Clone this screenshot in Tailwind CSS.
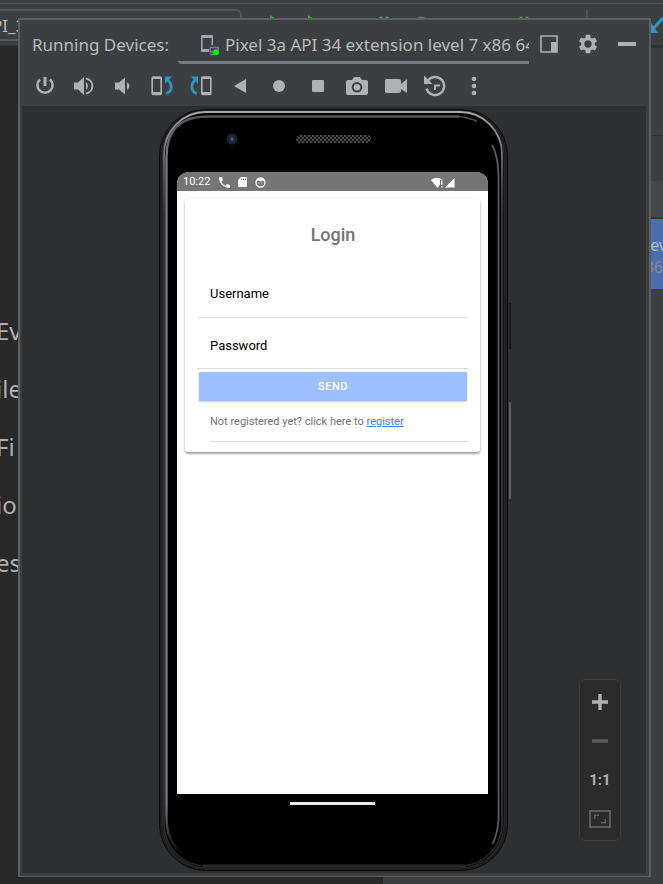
<!DOCTYPE html>
<html lang="en">
<head>
<meta charset="utf-8">
<meta name="viewport" content="width=device-width, initial-scale=1">
<title>Running Devices</title>
<script src="https://cdn.jsdelivr.net/npm/@tailwindcss/browser@4"></script>
</head>
<body class="bg-[#282828] font-['Noto_Sans',sans-serif]">
<div class="relative flex h-screen flex-col overflow-hidden">

  <!-- IDE behind the floating window -->
  <header class="flex h-[46px] shrink-0 flex-col border-b border-[#323232] bg-[#3c3f41]">
    <div class="h-1 shrink-0 border-b border-[#515456]"></div>
    <div class="flex items-start pt-[5px]">
      <div class="flex h-[32px] w-[242px] shrink-0 items-center rounded-r-md border-2 border-l-0 border-[#55585a] pt-[2px] text-[17px] leading-[24px] text-[#bbbbbb]"><span class="-ml-2">PI_3a</span></div>
      <svg class="h-[32px] w-[346px] shrink-0" viewBox="0 0 346 32" fill="none" aria-hidden="true">
        <path d="M28 6l6 4h-6zM66 6l6 4h-6zM137 9l2-2 2 2zM143 9l2-2 2 2zM277 9l2-2 2 2zM283 9l2-2 2 2z" fill="#499c54"/>
        <path d="M174 9q5-3 10 0z" fill="#6e6e6e"/>
        <path d="M345 1v22" stroke="#515456" stroke-width="2"/>
      </svg>
      <div class="flex flex-1 justify-end">
        <svg class="h-[32px] w-[14px]" viewBox="0 0 14 32" fill="none" aria-hidden="true"><path d="M14 9L4 20" stroke="#3592c4" stroke-width="3"/><path d="M1 12v12h8z" fill="#3592c4"/></svg>
      </div>
    </div>
  </header>
  <div class="flex min-h-0 flex-1">
    <ul class="flex min-w-0 flex-1 flex-col gap-[26px] overflow-hidden bg-[#282828] pt-[269px] text-[24px] leading-[32px] whitespace-nowrap text-[#b0b0b0]">
      <li class="-ml-1">Ev</li>
      <li class="-ml-1">ile</li>
      <li class="-ml-1">Fi</li>
      <li class="-ml-1">io</li>
      <li class="-ml-1">es</li>
    </ul>
    <aside class="flex w-[280px] shrink-0 flex-col items-stretch bg-[#3c3f41] text-right text-[16px] leading-[22px]">
      <div class="h-[90px] border-t-2 border-b border-[#323232]"></div>
      <div class="h-[45px]"></div>
      <div class="h-[38px] border-b-2 border-[#323232] bg-[#45484a]"></div>
      <div class="h-[70px] overflow-hidden bg-[#4b6eaf] pt-[15px]">
        <p class="-mr-1 text-[#bbbbbb]">ev</p>
        <p class="text-[#888888]">36</p>
      </div>
    </aside>
  </div>

  <!-- Floating tool window -->
  <section class="absolute top-[18px] right-[12px] bottom-[7px] left-[18px] flex flex-col border-2 border-b border-[#5e5e5e] bg-[#3c3f41]">
    <div class="flex h-[46px] shrink-0 items-stretch pr-[3px] text-[17px] text-[#bbbbbb]">
      <h1 class="w-[158px] shrink-0 pt-[13px] pl-3 leading-[24px] whitespace-nowrap">Running Devices:</h1>
      <div class="flex min-w-0 flex-1 flex-col">
        <button type="button" class="flex h-[44px] items-start overflow-hidden rounded-bl-sm border-b-[3px] border-[#747a86] pt-[13px] pl-[22px] text-left leading-[24px] whitespace-nowrap">
          <svg class="mr-[5px] h-[24px] w-[20px] shrink-0" viewBox="0 0 20 24" fill="none" aria-hidden="true">
            <path d="M2 2h10q1 0 1 1v9h-1.600V5H2.600v11H9v3H2q-1 0-1-1V3q0-1 1-1z" fill="#9aa7b0"/>
            <path d="M18.300 17v-2.500h-8v4.500h3M10 21.500h5" stroke="#8b6bb5" stroke-width="1.500"/>
            <circle cx="16" cy="19.300" r="3" fill="#00f500"/>
          </svg>
          <span>Pixel 3a API 34 extension level 7 x86 64</span>
        </button>
      </div>
      <div class="flex shrink-0 items-center pt-[2px]">
        <button type="button" aria-label="Dock" class="flex w-[39px] justify-center"><svg class="size-[20px]" viewBox="0 0 20 20"><path d="M2 2h16v16H2z" fill="none" stroke="#afb1b3" stroke-width="1.600"/><path d="M12 8h6v10h-6z" fill="#afb1b3"/></svg></button>
        <button type="button" aria-label="Settings" class="flex w-[39px] justify-center"><svg class="size-[22px]" viewBox="0 0 24 24" fill="#afb1b3"><path d="M19.430 12.980c.04-.32.070-.64.070-.98s-.03-.66-.07-.98l2.110-1.650c.19-.15.240-.42.120-.64l-2-3.460c-.12-.22-.39-.3-.61-.22l-2.490 1c-.52-.4-1.080-.73-1.690-.98l-.38-2.650C14.460 2.180 14.250 2 14 2h-4c-.25 0-.46.180-.49.420l-.38 2.650c-.61.250-1.170.590-1.690.980l-2.490-1c-.23-.09-.49 0-.61.220l-2 3.460c-.13.220-.07.490.120.640l2.110 1.650c-.04.320-.07.650-.07.980s.03.660.07.980l-2.110 1.650c-.19.150-.24.420-.12.640l2 3.460c.12.220.39.300.61.220l2.490-1c.52.400 1.080.730 1.690.980l.38 2.650c.03.240.24.420.49.420h4c.25 0 .46-.18.490-.42l.38-2.650c.61-.25 1.170-.59 1.690-.98l2.490 1c.23.090.49 0 .61-.22l2-3.460c.12-.22.070-.49-.12-.64zM12 16a4 4 0 110-8 4 4 0 010 8z"/></svg></button>
        <button type="button" aria-label="Hide" class="flex w-[39px] justify-center"><svg class="size-[20px]" viewBox="0 0 20 20"><path d="M1 8h18v4H1z" fill="#afb1b3"/></svg></button>
      </div>
    </div>

    <div role="toolbar" aria-label="Device controls" class="flex h-[40px] shrink-0 items-center pl-[5px]">
      <button type="button" aria-label="Power" class="flex w-[39px] justify-center"><svg class="size-[20px]" viewBox="0 0 20 20" fill="none" stroke="#afb1b3"><path d="M10 1v9" stroke-width="3"/><path d="M5 3.500a7.600 7.600 0 1010 0" stroke-width="2.600"/></svg></button>
      <button type="button" aria-label="Volume up" class="flex w-[39px] justify-center"><svg class="size-[22px]" viewBox="0 0 22 22"><path d="M1 7.500h4l6-5.500v18l-6-5.500H1zM13 7q4 4 0 8z" fill="#afb1b3"/><path d="M13 3.500a7.600 7.600 0 010 15" fill="none" stroke="#afb1b3" stroke-width="2"/></svg></button>
      <button type="button" aria-label="Volume down" class="flex w-[39px] justify-center"><svg class="size-[20px]" viewBox="0 0 20 20" fill="#afb1b3"><path d="M2 6.500h4l6-5v17l-6-5H2zM14 6q5 4 0 8z"/></svg></button>
      <button type="button" aria-label="Rotate left" class="flex w-[39px] justify-center"><svg class="size-[22px]" viewBox="0 0 22 22" fill="none"><rect x="1.200" y="2" width="9" height="17.500" rx="1" stroke="#afb1b3" stroke-width="1.600"/><path d="M1 3h9.500M1 18h9.500" stroke="#afb1b3" stroke-width="2"/><path d="M15 18.500q6-1.500 5-8-.4-3-3-5.500" stroke="#3592c4" stroke-width="2.800"/><path d="M14 1.500h7L14 9z" fill="#3592c4"/></svg></button>
      <button type="button" aria-label="Rotate right" class="flex w-[39px] justify-center"><svg class="size-[22px]" viewBox="0 0 22 22" fill="none"><rect x="11.800" y="2" width="9" height="17.500" rx="1" stroke="#afb1b3" stroke-width="1.600"/><path d="M11.500 3H21M11.500 18H21" stroke="#afb1b3" stroke-width="2"/><path d="M7 18.500q-6-1.500-5-8 .4-3 3-5.500" stroke="#3592c4" stroke-width="2.800"/><path d="M1 1.500h7V9z" fill="#3592c4"/></svg></button>
      <button type="button" aria-label="Back" class="flex w-[39px] justify-center"><svg class="size-[20px]" viewBox="0 0 20 20" fill="#afb1b3"><path d="M16 3v14L4 10z"/></svg></button>
      <button type="button" aria-label="Home" class="flex w-[39px] justify-center"><svg class="size-[20px]" viewBox="0 0 20 20" fill="#afb1b3"><circle cx="10" cy="10" r="6"/></svg></button>
      <button type="button" aria-label="Overview" class="flex w-[39px] justify-center"><svg class="size-[20px]" viewBox="0 0 20 20" fill="#afb1b3"><rect x="4" y="4" width="12" height="12" rx="1"/></svg></button>
      <button type="button" aria-label="Screenshot" class="flex w-[39px] justify-center"><svg class="size-[22px]" viewBox="0 0 22 22" fill="#afb1b3"><path fill-rule="evenodd" d="M2 5h4l2-3h6l2 3h4q2 0 2 2v11q0 2-2 2H2q-2 0-2-2V7q0-2 2-2zM11 7a5.300 5.300 0 100 10.600A5.300 5.300 0 0011 7z"/><circle cx="11" cy="12.300" r="3.300"/></svg></button>
      <button type="button" aria-label="Record" class="flex w-[39px] justify-center"><svg class="size-[22px]" viewBox="0 0 22 22" fill="#afb1b3"><path d="M1.500 4H14q2 0 2 2v3l6-5v14l-6-4v2q0 2-2 2H1.500Q0 18 0 16.500v-11Q0 4 1.500 4z"/></svg></button>
      <button type="button" aria-label="Snapshots" class="flex w-[39px] justify-center"><svg class="size-[22px]" viewBox="0 0 22 22" fill="none" stroke="#afb1b3"><path d="M4 5.500a9 9 0 11-1.500 8" stroke-width="2.500"/><path d="M0 .5V9h8.500z" fill="#afb1b3" stroke="none"/><path d="M16 10.500h-5V15" stroke-width="2"/></svg></button>
      <button type="button" aria-label="More" class="flex w-[39px] justify-center"><svg class="size-[20px]" viewBox="0 0 20 20" fill="#afb1b3"><circle cx="10" cy="3" r="2.300"/><circle cx="10" cy="10" r="2.300"/><circle cx="10" cy="17" r="2.300"/></svg></button>
    </div>

    <div class="relative mr-[3px] mb-[3px] ml-[2px] flex min-h-0 flex-1 justify-center bg-[#2e2f30] pt-[2px]">
      <!-- Phone -->
      <div class="relative flex h-[764px] w-[354px] shrink-0 flex-col pt-[64px] pr-[23px] pl-[20px]">
        <svg class="absolute inset-0 size-full" viewBox="0 0 354 764" fill="none" aria-hidden="true">
          <defs>
            <linearGradient id="rim" x1="0" y1="0" x2="0" y2="1"><stop offset="0" stop-color="#a8a8ac"/><stop offset=".08" stop-color="#5a5a60"/><stop offset=".14" stop-color="#333336"/><stop offset=".9" stop-color="#333336"/><stop offset=".99" stop-color="#222222"/></linearGradient>
            <linearGradient id="edge" x1="0" y1="0" x2="0" y2="1"><stop offset="0" stop-color="#55555b"/><stop offset=".06" stop-color="#75757d"/><stop offset=".93" stop-color="#75757d"/><stop offset="1" stop-color="#75757d" stop-opacity="0"/></linearGradient>
            <pattern id="mesh" width="4" height="4" patternUnits="userSpaceOnUse"><rect width="4" height="4" fill="#151515"/><path d="M0 0l4 4M4 0L0 4" stroke="#4c4c4c"/></pattern>
          </defs>
          <path d="M353 195v46" stroke="#1a1a1a" stroke-width="2"/>
          <path d="M353 294v97" stroke="#707070" stroke-width="1.500"/>
          <rect x="2.500" y="1.500" width="348" height="761" rx="46" fill="#1f1f1f" stroke="#0a0a0a"/>
          <rect x="5.500" y="3" width="341.500" height="757" rx="44" fill="#000" stroke="#2c2c2c"/>
          <rect x="7" y="4" width="338" height="754" rx="42" stroke="url(#rim)" stroke-width="1.800"/>
          <rect x="10" y="8" width="332" height="749" rx="38" fill="#000"/>
          <path d="M302 8.500H50Q9.500 8.500 9.500 49V710q0 24 18 38" stroke="url(#edge)" stroke-width="2.400"/>
          <path d="M302 8.500q13 2 18 5" stroke="#4c4c52" stroke-width="1.500"/>
          <path d="M335 37q6 10 6.500 30v645q-1 14-6 24" stroke="#5a5a60" stroke-width="1.800"/>
          <path d="M46 758H308" stroke="#2a2a2a" stroke-width="3"/>
          <circle cx="75" cy="31" r="5.500" fill="#222"/><circle cx="75" cy="31" r="3.200" fill="#202c52"/><circle cx="75" cy="31" r="1.200" fill="#4f68b0"/>
          <rect x="139" y="27" width="75" height="8" rx="4" fill="url(#mesh)"/>
        </svg>

        <div class="relative flex h-[622px] flex-col overflow-hidden rounded-t-xl bg-white font-[Roboto,sans-serif]">
          <div class="flex h-[19px] shrink-0 items-center bg-[#757575] pt-px pl-[6px] pr-[33px] text-[11px] leading-[16px] text-white">
            <span>10:22</span>
            <svg class="ml-[9px] size-[11px]" viewBox="3 3 18 18" fill="currentColor" aria-hidden="true"><path d="M6.620 10.790c1.440 2.830 3.760 5.140 6.590 6.590l2.200-2.200c.27-.27.670-.36 1.020-.24 1.120.37 2.330.570 3.570.570.550 0 1 .45 1 1V20c0 .55-.45 1-1 1-9.390 0-17-7.610-17-17 0-.55.450-1 1-1h3.500c.55 0 1 .45 1 1 0 1.250.2 2.450.570 3.570.11.350.03.740-.25 1.020z"/></svg>
            <svg class="ml-[8px] h-[10px] w-[9px]" viewBox="0 0 9 10" fill="currentColor" aria-hidden="true"><path fill-rule="evenodd" d="M3 0h5q1 0 1 1v8q0 1-1 1H1Q0 10 0 9V3zM3 1.500V3h1V1.500zM5 1.500V3h1V1.500zM7 1.500V3h1V1.500z"/></svg>
            <svg class="ml-[8px] size-[11px]" viewBox="0 0 11 11" fill="none" stroke="currentColor" aria-hidden="true"><circle cx="5.500" cy="5.500" r="4.500" stroke-width="1.300"/><path d="M1 4.500L2.500 1.500h6L10 4.500 7.500 3.500 5.500 4.500 3.500 3.500z" fill="currentColor" stroke="none"/><path d="M3.500 6h1M6.500 6h1"/></svg>
            <svg class="ml-auto h-[11px] w-[24px]" viewBox="0 0 24 11" fill="currentColor" aria-hidden="true"><path d="M0 3Q6-1.500 12 3H9v4.500L6.500 11zM10 3.500h1.500V8H10zM10 9h1.500v1.500H10zM23.500 1v9.500H14z"/></svg>
          </div>

          <main class="mx-[8px] mt-[8px] rounded-[3px] bg-white pr-[12px] pl-[13px] pb-[10px] shadow-[0_2px_2px_rgba(0,0,0,0.25),0_1px_3px_rgba(0,0,0,0.22)]">
            <h2 class="pt-[24px] text-center text-[18px] leading-[24px] font-medium text-[#737373]">Login</h2>
            <form>
              <div class="mt-[20px] flex h-[51px] items-center border-b border-[#e4e4e4] pt-[4px] pl-[12px] text-[13px] leading-[16px] text-black">
                <label for="username">Username</label>
                <input id="username" type="text" class="ml-2 min-w-0 flex-1 bg-transparent outline-none">
              </div>
              <div class="flex h-[51px] items-center border-b border-[#d6d6d6] pt-[5px] pl-[12px] text-[13px] leading-[16px] text-black">
                <label for="password">Password</label>
                <input id="password" type="password" class="ml-2 min-w-0 flex-1 bg-transparent outline-none">
              </div>
              <div class="px-px pt-[3px]">
                <button type="submit" class="block h-[29px] w-full rounded-[1px] bg-[#9dbfff] text-[11px] leading-[14px] font-medium tracking-wider text-white shadow-[0_1px_2px_rgba(0,0,0,0.2)]">SEND</button>
              </div>
            </form>
            <p class="ml-[12px] h-[41px] border-b border-[#dedede] pt-[14px] text-[11px] leading-[14px] whitespace-nowrap text-[#737373]">Not registered yet? click here to <a href="#register" class="text-[#3880ff] underline">register</a></p>
          </main>
        </div>
        <div class="relative mx-auto mt-[8px] h-[3px] w-[85px] bg-[#ececec]"></div>
      </div>

      <!-- Zoom controls float over the device view -->
      <div class="absolute right-[25px] bottom-[32px] flex w-[42px] flex-col rounded-md border border-[#3c3e3f] bg-[#2b2b2b] py-[2px]">
        <button type="button" aria-label="Zoom in" class="flex h-[39px] items-center justify-center"><svg class="size-[16px]" viewBox="0 0 16 16"><path d="M8 0v16M0 8h16" stroke="#afb1b3" stroke-width="3.400"/></svg></button>
        <button type="button" aria-label="Zoom out" disabled class="flex h-[39px] items-center justify-center"><svg class="size-[16px]" viewBox="0 0 16 16"><path d="M0 8h16" stroke="#5c5d5e" stroke-width="3.400"/></svg></button>
        <button type="button" class="flex h-[39px] items-center justify-center font-[Roboto,sans-serif] text-[15px] leading-[18px] font-bold text-[#afb1b3]">1:1</button>
        <button type="button" aria-label="Zoom to fit" disabled class="flex h-[39px] items-center justify-center"><svg class="h-[18px] w-[22px]" viewBox="0 0 22 18" fill="none" stroke="#5c5d5e"><path d="M1 1h20v16H1z" stroke-width="2"/><path d="M5.700 9V5.200H10M16.300 9v3.800H12" stroke-width="1.500"/></svg></button>
      </div>
    </div>
  </section>
</div>
</body>
</html>
